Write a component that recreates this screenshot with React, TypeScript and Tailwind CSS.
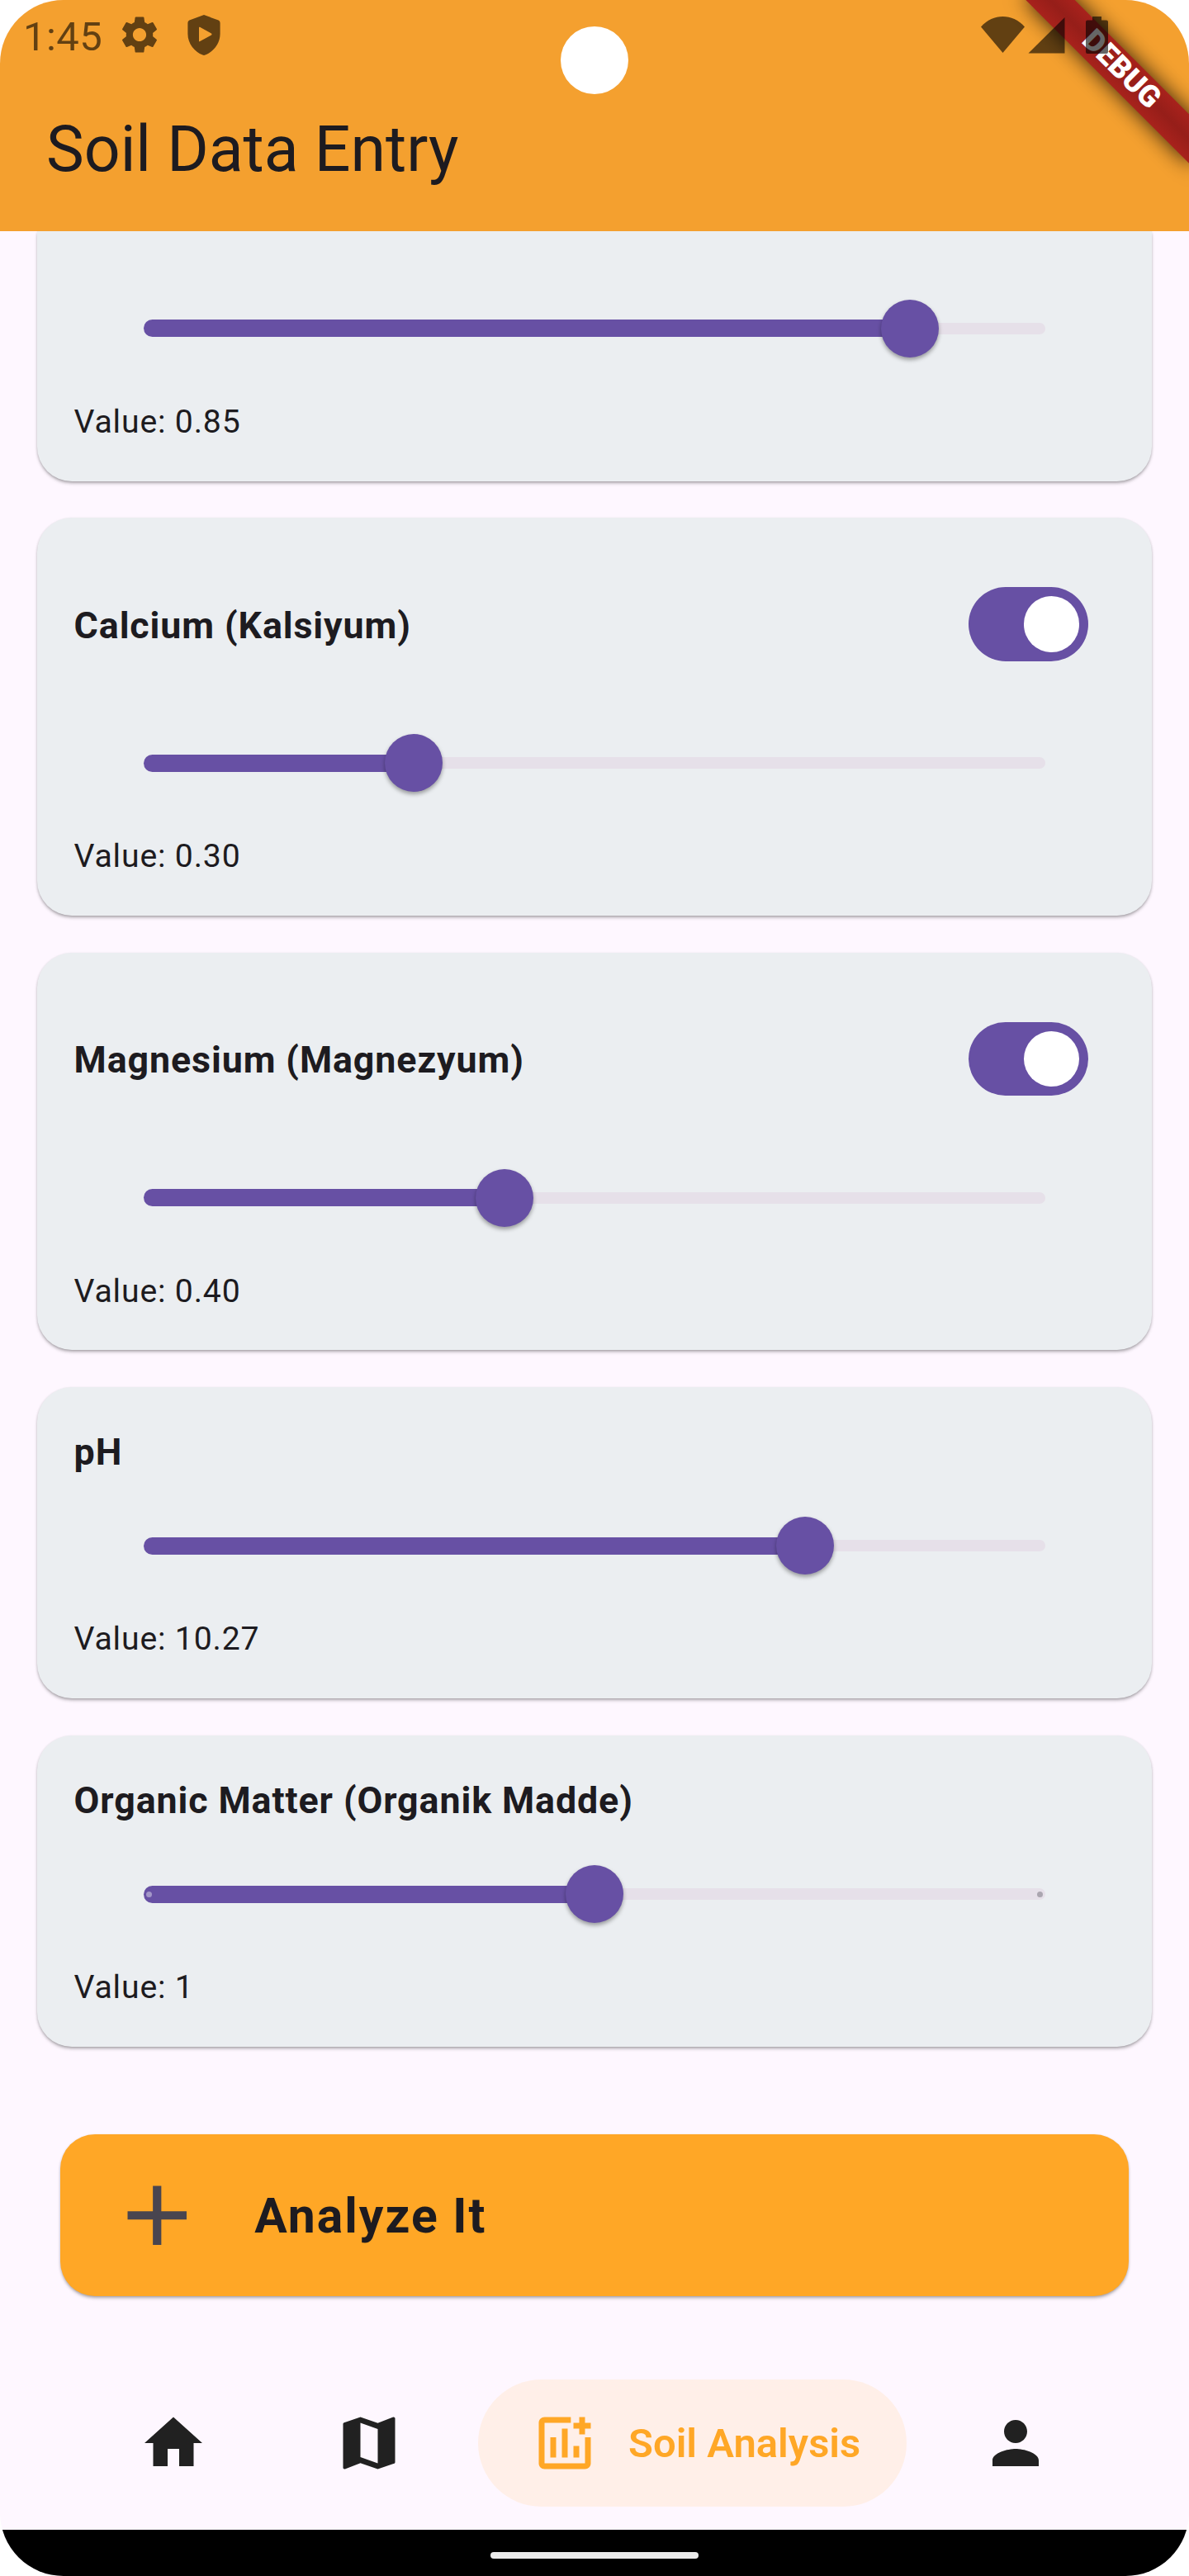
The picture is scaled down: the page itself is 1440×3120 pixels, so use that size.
import type { ReactNode } from "react";
import { MdAdd, MdHome, MdMap, MdPerson, MdSettings } from "react-icons/md";

function ShieldPlay() {
  return (
    <svg width="40" height="49" viewBox="0 0 40 49" fill="currentColor" fillRule="evenodd">
      <path d="M20 0 L37.6 6.6 Q39.6 7.6 39.6 9.8 V23 C39.6 35 31 45 21.6 48.6 Q20 49.2 18.4 48.6 C9 45 0.4 35 0.4 23 V9.8 Q0.4 7.6 2.4 6.6 Z M15 14.8 Q14 14.4 14 15.6 V31.4 Q14 32.8 15.2 32.1 L29 24.4 Q30 23.4 29 22.6 Z" />
    </svg>
  );
}

function AddChart() {
  return (
    <svg className="size-[84px] shrink-0" viewBox="0 0 24 24" fill="currentColor">
      <path d="M19 10h2v9c0 1.1-.9 2-2 2H5c-1.1 0-2-.9-2-2V5c0-1.1.9-2 2-2h9.1v2H5v14h14z" />
      <path d="M7 10h2v7H7zM11 7h2v10h-2zM15 13h2v4h-2zM17 3h2v2h2v2h-2v2h-2V7h-2V5h2z" />
    </svg>
  );
}

function StatusBar() {
  return (
    <div className="relative z-10 flex h-[84px] items-center pl-[28px] pr-[98px] text-black/60">
      <span className="w-[114px] pt-[4px] text-[49px] leading-none tracking-[0.4px]">1:45</span>
      <MdSettings className="size-[54px]" />
      <div className="ml-[31px]">
        <ShieldPlay />
      </div>
      <div className="ml-auto flex items-start">
        <svg width="53" height="44" viewBox="0 0 53 44" fill="currentColor">
          <path d="M26.5 44 L0 12.4 C15 -4.1 38 -4.1 53 12.4 Z" />
        </svg>
        <svg className="ml-[4px] mt-[1px]" width="45" height="44" viewBox="0 0 45 44" fill="currentColor">
          <path d="M0.5 43.5 L44.5 0 V43.5 Z" />
        </svg>
        <svg className="ml-[25px]" width="27" height="45" viewBox="0 0 27 45" fill="currentColor">
          <path d="M8 0 H19 V4.6 H25 Q27 4.6 27 6.6 V43 Q27 45 25 45 H2 Q0 45 0 43 V6.6 Q0 4.6 2 4.6 H8 Z" />
        </svg>
      </div>
    </div>
  );
}

function DebugBanner() {
  return (
    <div className="absolute left-[1215.8px] top-[63.2px] h-[42px] w-[280px] rotate-45">
      <div className="absolute inset-0 bg-black/80 blur-[13px]" />
      <div className="absolute inset-0 flex items-center justify-center bg-linear-to-b from-[#a8221c] via-[#961e19] to-[#a8221c] text-[36.5px] font-black leading-none text-white">
        <span className="pb-[3px] pl-[3px]">DEBUG</span>
      </div>
    </div>
  );
}

function Slider({ value, ticks = false }: { value: number; ticks?: boolean }) {
  return (
    <div className="mx-[84px] flex h-[168px] items-center">
      <div className="relative h-[21px] w-[1093.4px]">
        <div className="absolute inset-x-0 top-[3.5px] h-[14px] rounded-full bg-[#e6e0e9]" />
        <div className="absolute left-0 top-0 h-[21px] rounded-full bg-[#6750a4]" style={{ width: `${value * 100}%` }} />
        {ticks && (
          <>
            <div className="absolute left-[3.5px] top-[7px] size-[7px] rounded-full bg-white/40" />
            <div className="absolute right-[3.5px] top-[7px] size-[7px] rounded-full bg-[#aba6b0]" />
          </>
        )}
        <div
          className="absolute top-[-24.5px] size-[70px] -translate-x-1/2 rounded-full bg-[#6750a4] shadow-[0_3px_5px_rgba(0,0,0,0.35)]"
          style={{ left: `${value * 100}%` }}
        />
      </div>
    </div>
  );
}

function Toggle() {
  return (
    <div className="mr-[32px] flex h-[89.6px] w-[145.6px] items-center justify-end rounded-full bg-[#6750a4] pr-[11.2px]">
      <div className="size-[67.6px] rounded-full bg-white" />
    </div>
  );
}

const cardShadow = "shadow-[0_3px_4px_-1px_rgba(0,0,0,0.3),0_1px_3px_rgba(0,0,0,0.13)]";

function Card({ className, children }: { className: string; children: ReactNode }) {
  return (
    <section className={`mx-[44.8px] bg-[#ebeef1] px-[44.8px] pb-[44.8px] ${cardShadow} ${className}`}>{children}</section>
  );
}

function Value({ text }: { text: string }) {
  return <p className="h-[56px] text-[39.2px] leading-[58px] tracking-[0.82px]">Value: {text}</p>;
}

const titleClass = "text-[44.8px] font-bold tracking-[0.88px]";

function NutrientCard({ title, value, label }: { title: string; value: number; label: string }) {
  return (
    <Card className="rounded-[42px] pt-[44.8px]">
      <div className="flex h-[168px] items-center justify-between">
        <h2 className={`pt-[2px] ${titleClass}`}>{title}</h2>
        <Toggle />
      </div>
      <Slider value={value} />
      <Value text={label} />
    </Card>
  );
}

function MeasureCard({ title, value, label, ticks }: { title: string; value: number; label: string; ticks?: boolean }) {
  return (
    <Card className="rounded-[42px] pt-[44.8px]">
      <h2 className={`h-[63.4px] leading-[67.2px] ${titleClass}`}>{title}</h2>
      <Slider value={value} ticks={ticks} />
      <Value text={label} />
    </Card>
  );
}

function NavItem({ children }: { children: ReactNode }) {
  return <div className="flex h-[154px] w-[210px] items-center justify-center text-[#212121]">{children}</div>;
}

export default function App() {
  return (
    <div className="h-[3120px] w-[1440px] bg-white">
      <div className="relative flex h-[3120px] flex-col overflow-hidden rounded-[77px] bg-[#fef7ff] font-['Roboto',sans-serif] text-[#1d1b20]">
        <header className="relative z-10 h-[280px] shrink-0 overflow-hidden bg-[#f4a02f]">
          <DebugBanner />
          <StatusBar />
          <div className="absolute left-[679px] top-[32px] size-[82px] rounded-full bg-white" />
          <h1 className="flex h-[194px] items-center pl-[56px] text-[77px] leading-none">Soil Data Entry</h1>
        </header>

        <main className="flex flex-1 flex-col gap-[44.8px]">
          <Card className="rounded-b-[42px] pt-[33.9px]">
            <Slider value={0.85} />
            <Value text="0.85" />
          </Card>
          <NutrientCard title="Calcium (Kalsiyum)" value={0.3} label="0.30" />
          <NutrientCard title="Magnesium (Magnezyum)" value={0.4} label="0.40" />
          <MeasureCard title="pH" value={0.7336} label="10.27" />
          <MeasureCard title="Organic Matter (Organik Madde)" value={0.5} label="1" ticks />

          <button
            className={`mx-[72.8px] mt-[61.5px] flex h-[196px] items-center gap-[57px] rounded-[42px] bg-[#ffa726] pl-[56px] text-left ${cardShadow}`}
          >
            <MdAdd className="size-[122.5px] text-[#49454f]" />
            <span className="pt-[2px] text-[58.8px] font-bold tracking-[2px]">Analyze It</span>
          </button>
        </main>

        <nav className="flex h-[182px] shrink-0 items-start justify-between px-[105px]">
          <NavItem>
            <MdHome className="size-[84px]" />
          </NavItem>
          <NavItem>
            <MdMap className="size-[84px]" />
          </NavItem>
          <div className="flex h-[154px] w-[519px] items-center gap-[35px] rounded-full bg-[#ffefe8] pl-[63px] text-[#ffa726]">
            <AddChart />
            <span className="whitespace-nowrap pt-[2px] text-[49px] font-semibold">Soil Analysis</span>
          </div>
          <NavItem>
            <MdPerson className="size-[84px]" />
          </NavItem>
        </nav>

        <div className="flex h-[56px] shrink-0 items-center justify-center bg-black pt-[6px]">
          <div className="h-[8px] w-[252px] rounded-full bg-[#ebebeb]" />
        </div>
      </div>
    </div>
  );
}
